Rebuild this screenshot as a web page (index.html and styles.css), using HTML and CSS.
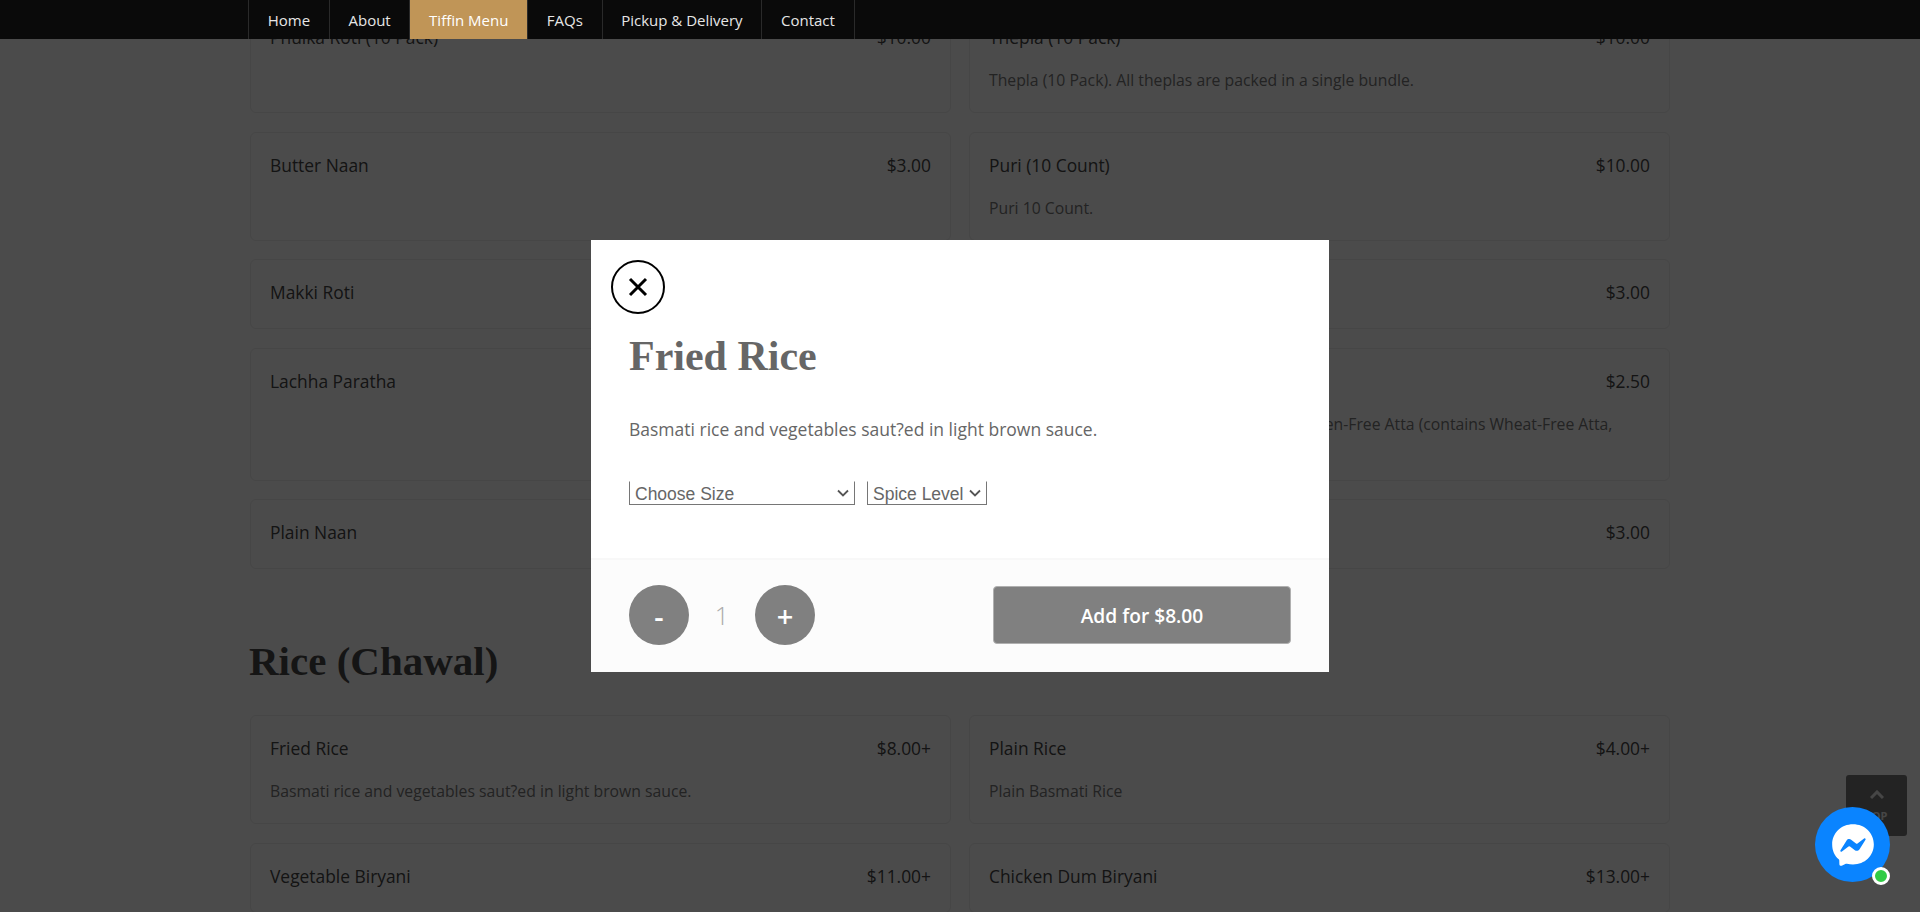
FILE: index.html
```html
<!DOCTYPE html>
<html lang="en">
<head>
    <meta charset="UTF-8">
    <meta name="viewport" content="width=device-width, initial-scale=1.0">
    <title>Tiffin Menu</title>
    <link rel="stylesheet" href="styles.css">
</head>
<body>
    <nav class="topnav">
        <a href="#">Home</a>
        <a href="#">About</a>
        <a href="#" class="active">Tiffin Menu</a>
        <a href="#">FAQs</a>
        <a href="#">Pickup &amp; Delivery</a>
        <a href="#">Contact</a>
    </nav>

    <!-- Menu behind the popup, scrolled part way down -->
    <main class="page">
        <div class="menu-scroll">
            <div class="menu-grid">
                <div class="card"><div class="card-head"><span>Phulka Roti (10 Pack)</span><span>$10.00</span></div></div>
                <div class="card"><div class="card-head"><span>Thepla (10 Pack)</span><span>$10.00</span></div><p>Thepla (10 Pack). All theplas are packed in a single bundle.</p></div>
                <div class="card"><div class="card-head"><span>Butter Naan</span><span>$3.00</span></div></div>
                <div class="card"><div class="card-head"><span>Puri (10 Count)</span><span>$10.00</span></div><p>Puri 10 Count.</p></div>
                <div class="card"><div class="card-head"><span>Makki Roti</span><span>$3.00</span></div></div>
                <div class="card"><div class="card-head"><span>Tandoori Roti</span><span>$3.00</span></div></div>
                <div class="card"><div class="card-head"><span>Lachha Paratha</span><span>$3.50</span></div></div>
                <div class="card"><div class="card-head"><span>Gluten-Free Roti</span><span>$2.50</span></div><p>Freshly made roti prepared with our own Gluten-Free Atta (contains Wheat-Free Atta,<br>Rice Flour).</p></div>
                <div class="card"><div class="card-head"><span>Plain Naan</span><span>$3.00</span></div></div>
                <div class="card"><div class="card-head"><span>Garlic Naan</span><span>$3.00</span></div></div>
            </div>

            <h2 class="section-title">Rice (Chawal)</h2>

            <div class="menu-grid">
                <div class="card"><div class="card-head"><span>Fried Rice</span><span>$8.00+</span></div><p>Basmati rice and vegetables saut?ed in light brown sauce.</p></div>
                <div class="card"><div class="card-head"><span>Plain Rice</span><span>$4.00+</span></div><p>Plain Basmati Rice</p></div>
                <div class="card"><div class="card-head"><span>Vegetable Biryani</span><span>$11.00+</span></div></div>
                <div class="card"><div class="card-head"><span>Chicken Dum Biryani</span><span>$13.00+</span></div></div>
            </div>
        </div>
    </main>

    <a href="#" class="to-top">
        <svg width="14" height="10" viewBox="0 0 14 10"><path d="M1 8l6-6 6 6" fill="none" stroke="currentColor" stroke-width="3"/></svg>
        <span>TOP</span>
    </a>

    <div class="overlay"></div>

    <div class="modal">
        <div class="modal-body">
            <button class="close-btn" aria-label="Close">
                <svg width="20" height="20" viewBox="0 0 20 20"><path d="M2 2l16 16M18 2L2 18" stroke="#000" stroke-width="3" fill="none"/></svg>
            </button>
            <h3>Fried Rice</h3>
            <p class="modal-desc">Basmati rice and vegetables saut?ed in light brown sauce.</p>
            <div class="modal-options">
                <select class="size-select"><option>Choose Size</option></select>
                <select class="spice-select"><option>Spice Level</option></select>
            </div>
        </div>
        <div class="modal-foot">
            <button class="qty-btn">-</button>
            <span class="qty">1</span>
            <button class="qty-btn">+</button>
            <button class="add-btn">Add for $8.00</button>
        </div>
    </div>

    <div class="chat-bubble">
        <svg width="50" height="50" viewBox="0 0 24 24"><path fill="#fff" d="M12 2C6.36 2 2 6.13 2 11.7c0 2.91 1.19 5.44 3.14 7.17.16.13.26.35.27.57l.05 1.78c.04.57.61.94 1.13.71l1.98-.87c.17-.06.36-.09.53-.04.9.27 1.9.38 2.9.38 5.64 0 10-4.13 10-9.7C22 6.13 17.64 2 12 2zm6 7.46l-2.93 4.67c-.47.73-1.47.92-2.17.37l-2.34-1.73a.6.6 0 0 0-.72 0l-3.16 2.4c-.42.33-.97-.17-.68-.63l2.93-4.67c.47-.73 1.47-.92 2.17-.4l2.34 1.76a.6.6 0 0 0 .72 0l3.16-2.4c.42-.33.97.17.68.63z"/></svg>
        <span class="chat-dot"></span>
    </div>
</body>
</html>
```

FILE: styles.css
```css
/* Global Reset */
* {
    margin: 0;
    padding: 0;
    box-sizing: border-box;
}

body {
    font-family: 'Open Sans', Arial, sans-serif;
    background-color: #fff;
    color: #333;
    height: 912px;
    overflow: hidden;
    position: relative;
    display: flex;
    flex-direction: column;
}

/* Top Nav */
.topnav {
    display: flex;
    flex: none;
    height: 39px;
    padding-left: 248px;
    background-color: #0a0a0a;
    position: relative;
    z-index: 20;
    opacity: 0.999;
}

.topnav a {
    display: flex;
    align-items: center;
    padding: 0 18.7px;
    border-left: 1px solid #2a2a2a;
    color: #e6e6e6;
    font-size: 15px;
    text-decoration: none;
}

.topnav a:last-child {
    border-right: 1px solid #2a2a2a;
}

.topnav a.active {
    background-color: #c09557;
    background-clip: padding-box;
    color: #fff;
}

/* Menu */
.page {
    flex: 1;
    overflow: hidden;
    padding: 0 250px;
    opacity: 0.999;
}

.menu-scroll {
    margin-top: -35px;
}

.menu-grid {
    display: grid;
    grid-template-columns: 701px 701px;
    column-gap: 18px;
    row-gap: 18.5px;
}

.card {
    border: 1px solid #ececec;
    border-radius: 6px;
    padding: 20px 19px;
}

.card-head {
    display: flex;
    justify-content: space-between;
    font-size: 17.4px;
    line-height: 24px;
    padding-bottom: 4px;
    color: #444;
}

.card p {
    font-size: 15.75px;
    line-height: 24px;
    margin-top: 15px;
    color: #777;
}

.section-title {
    font-family: 'Liberation Serif', 'DejaVu Serif', serif;
    font-size: 41px;
    line-height: 60px;
    font-weight: bold;
    color: #4a4a4a;
    margin: 62px 0 24px -1px;
}

/* Back to top */
.to-top {
    position: absolute;
    right: 13px;
    top: 775px;
    width: 61px;
    height: 61px;
    border-radius: 3px;
    background-color: #777;
    color: #eee;
    text-decoration: none;
    display: flex;
    flex-direction: column;
    align-items: center;
    padding-top: 15px;
    gap: 8px;
}

.to-top span {
    font-size: 11px;
    font-weight: bold;
}

/* Popup */
.overlay {
    position: absolute;
    inset: 0;
    background-color: rgba(0, 0, 0, 0.705);
    z-index: 10;
}

.modal {
    position: absolute;
    left: 591px;
    top: 240px;
    width: 738px;
    height: 432px;
    background-color: #fff;
    z-index: 15;
    display: flex;
    flex-direction: column;
    opacity: 0.999;
}

.modal-body {
    flex: 1;
    padding: 20px 38px 0;
    position: relative;
}

.close-btn {
    position: absolute;
    left: 20px;
    top: 20px;
    width: 54px;
    height: 54px;
    padding-right: 1px;
    border: 2px solid #000;
    border-radius: 50%;
    background: #fff;
    display: flex;
    align-items: center;
    justify-content: center;
}

.modal-body h3 {
    font-family: 'Liberation Serif', 'DejaVu Serif', serif;
    font-size: 42px;
    line-height: 60px;
    font-weight: bold;
    color: #666;
    margin-top: 66px;
}

.modal-desc {
    font-size: 17.5px;
    line-height: 24px;
    color: #666;
    margin-top: 31px;
}

.modal-options {
    display: flex;
    gap: 12px;
    margin-top: 40px;
}

.modal-options select {
    appearance: none;
    height: 24px;
    padding: 1px 0 0 5px;
    font-family: 'Liberation Sans', Arial, sans-serif;
    font-size: 17.5px;
    color: #666;
    border: 1px solid #767676;
    border-top-color: #fff;
    border-radius: 0;
    background: #fff url("data:image/svg+xml,%3Csvg xmlns='http://www.w3.org/2000/svg' width='12' height='8'%3E%3Cpath d='M1 1.5l5 5 5-5' fill='none' stroke='%23555' stroke-width='1.8'/%3E%3C/svg%3E") no-repeat right 5px center;
}

.size-select {
    width: 226px;
}

.spice-select {
    width: 120px;
}

.modal-foot {
    flex: none;
    height: 114px;
    background-color: #fcfcfc;
    border-top: 2px solid #f8f8f8;
    padding: 0 38px 2px;
    display: flex;
    align-items: center;
}

.qty-btn {
    width: 60px;
    height: 60px;
    border: none;
    border-radius: 50%;
    background-color: #808080;
    color: #fff;
    font-family: 'Open Sans', Arial, sans-serif;
    font-size: 29px;
    font-weight: 600;
}

.qty {
    width: 66px;
    text-align: center;
    font-size: 25px;
    font-weight: 300;
    color: #aaa;
}

.add-btn {
    margin-left: auto;
    width: 298px;
    height: 58px;
    border: 1px solid #b0b0b0;
    border-radius: 4px;
    background-color: #808080;
    color: #fff;
    font-family: 'Open Sans', Arial, sans-serif;
    font-size: 19.2px;
    font-weight: 600;
}

/* Messenger bubble */
.chat-bubble {
    position: absolute;
    left: 1815px;
    top: 807px;
    width: 75px;
    height: 75px;
    border-radius: 50%;
    background-color: #0a84ff;
    z-index: 30;
    display: flex;
    align-items: center;
    justify-content: center;
}

.chat-dot {
    position: absolute;
    right: 0;
    bottom: -3px;
    width: 18px;
    height: 18px;
    border: 3px solid #fff;
    border-radius: 50%;
    background-color: #31cc46;
}
```
